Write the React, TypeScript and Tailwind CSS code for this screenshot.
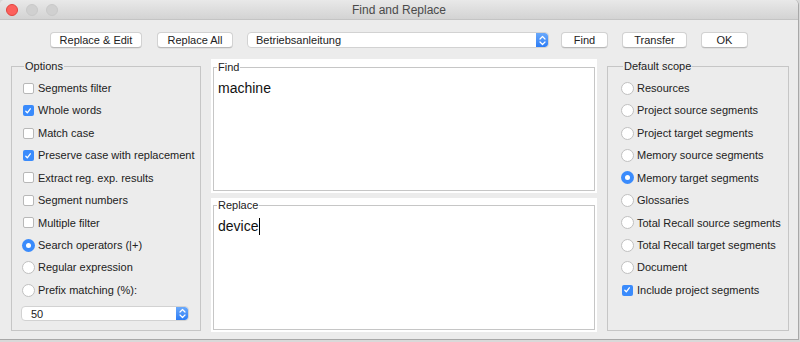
import React from "react";

const font = { fontFamily: '"Liberation Sans", Arial, sans-serif' };

function Stepper() {
  return (
    <span className="flex h-full w-[12px] items-center justify-center rounded-r-[3px] bg-gradient-to-b from-[#6aa9fb] to-[#2b7cf5]">
      <svg width="7" height="11" viewBox="0 0 7 11" fill="none" stroke="white" strokeWidth="1.2" strokeLinecap="round" strokeLinejoin="round">
        <path d="M1 4 L3.5 1.5 L6 4" />
        <path d="M1 7 L3.5 9.5 L6 7" />
      </svg>
    </span>
  );
}

function Btn({ label, w }: { label: string; w: string }) {
  return (
    <div className={`flex h-[16px] items-center justify-center rounded-[4px] border border-[#d2d2d2] border-b-[#b9b9b9] bg-white text-[11px] text-[#222] shadow-[0_0.5px_0.5px_rgba(0,0,0,0.1)] ${w}`}>
      {label}
    </div>
  );
}

function Check({ on }: { on?: boolean }) {
  return on ? (
    <span className="flex h-[11px] w-[11px] items-center justify-center rounded-[2px] bg-[#3a8bfc]">
      <svg width="8" height="8" viewBox="0 0 8 8" fill="none" stroke="white" strokeWidth="1.3" strokeLinecap="round" strokeLinejoin="round">
        <path d="M1.8 4.2 L3.3 5.8 L6.3 1.8" />
      </svg>
    </span>
  ) : (
    <span className="h-[11px] w-[11px] rounded-[2px] border border-[#b8b8b8] bg-white" />
  );
}

function Radio({ on }: { on?: boolean }) {
  return on ? (
    <span className="flex h-[13px] w-[13px] items-center justify-center rounded-full bg-[#3a8bfc]">
      <span className="h-[5px] w-[5px] rounded-full bg-white" />
    </span>
  ) : (
    <span className="h-[13px] w-[13px] rounded-full border border-[#c0c0c0] bg-white" />
  );
}

type Item = { label: string; kind: "c" | "r"; on?: boolean };

function Row({ item }: { item: Item }) {
  return (
    <div className="flex h-[22.45px] items-center whitespace-nowrap">
      <span className="flex w-[14px] shrink-0 justify-center">
        {item.kind === "c" ? <Check on={item.on} /> : <Radio on={item.on} />}
      </span>
      <span className="ml-[3px] shrink-0 text-[11px] text-[#222]">{item.label}</span>
    </div>
  );
}

const options: Item[] = [
  { label: "Segments filter", kind: "c" },
  { label: "Whole words", kind: "c", on: true },
  { label: "Match case", kind: "c" },
  { label: "Preserve case with replacement", kind: "c", on: true },
  { label: "Extract reg. exp. results", kind: "c" },
  { label: "Segment numbers", kind: "c" },
  { label: "Multiple filter", kind: "c" },
  { label: "Search operators (|+)", kind: "r", on: true },
  { label: "Regular expression", kind: "r" },
  { label: "Prefix matching (%):", kind: "r" },
];

const scope: Item[] = [
  { label: "Resources", kind: "r" },
  { label: "Project source segments", kind: "r" },
  { label: "Project target segments", kind: "r" },
  { label: "Memory source segments", kind: "r" },
  { label: "Memory target segments", kind: "r", on: true },
  { label: "Glossaries", kind: "r" },
  { label: "Total Recall source segments", kind: "r" },
  { label: "Total Recall target segments", kind: "r" },
  { label: "Document", kind: "r" },
  { label: "Include project segments", kind: "c", on: true },
];

function TextPanel({ title, text, cursor, h, pt }: { title: string; text: string; cursor?: boolean; h: string; pt: string }) {
  return (
    <div className={`bg-white px-[2px] pb-[2px] ${pt} ${h}`}>
      <fieldset className="h-full min-w-0 border border-[#c6c6c6] px-[4px]">
        <legend className="ml-[-1px] px-[1px] text-[11px] leading-[11px] text-[#222]">{title}</legend>
        <div className="mt-[5px] flex items-center text-[14px] text-[#111]">
          {text}
          {cursor && <span className="ml-[1px] h-[17px] w-[1px] bg-black" />}
        </div>
      </fieldset>
    </div>
  );
}

export default function App() {
  return (
    <div style={font} className="h-[342px] w-[800px] overflow-hidden bg-[#d9d9d9]">
      <div className="flex h-[340px] w-[799px] flex-col overflow-hidden rounded-t-[5px] border-b border-r border-[#a8a8a8] bg-[#ececec]">
        {/* title bar */}
        <div className="relative flex h-[20px] items-center border-b border-[#c4c4c4] bg-gradient-to-b from-[#e9e9e9] to-[#d3d3d3]">
          <div className="flex gap-[8px] pl-[6px]">
            <span className="h-[12px] w-[12px] rounded-full border border-[#e0443e] bg-[#fc605c]" />
            <span className="h-[12px] w-[12px] rounded-full border border-[#c8c8c8] bg-[#d0d0d0]" />
            <span className="h-[12px] w-[12px] rounded-full border border-[#c8c8c8] bg-[#d0d0d0]" />
          </div>
          <span className="absolute inset-x-0 text-center text-[12px] text-[#4a4a4a]">Find and Replace</span>
        </div>

        {/* buttons */}
        <div className="flex items-center pl-[50px] pt-[12px]">
          <Btn label="Replace & Edit" w="w-[92px]" />
          <div className="ml-[15px]"><Btn label="Replace All" w="w-[76px]" /></div>
          <div className="ml-[14px] flex h-[16px] w-[302px] items-center overflow-hidden rounded-[4px] border border-[#d2d2d2] bg-white">
            <span className="flex-1 pl-[8px] text-[11px] text-[#222]">Betriebsanleitung</span>
            <Stepper />
          </div>
          <div className="ml-[12px]"><Btn label="Find" w="w-[47px]" /></div>
          <div className="ml-[14px]"><Btn label="Transfer" w="w-[65px]" /></div>
          <div className="ml-[14px]"><Btn label="OK" w="w-[47px]" /></div>
        </div>

        {/* panels */}
        <div className="mt-[11px] flex">
          <fieldset className="ml-[11px] mt-[1px] h-[271px] w-[190px] min-w-0 shrink-0 border border-[#c6c6c6] pl-[9px] pr-[8px]">
            <legend className="ml-[3px] px-[1px] text-[11px] leading-[13px] text-[#222]">Options</legend>
            <div className="mt-[4px] flex flex-col">
              {options.map((o) => (
                <Row key={o.label} item={o} />
              ))}
            </div>
            <div className="mt-[5px] flex h-[15px] w-[168px] items-center overflow-hidden rounded-[4px] border border-[#d2d2d2] bg-white">
              <span className="flex-1 pl-[9px] text-[11px] text-[#222]">50</span>
              <Stepper />
            </div>
          </fieldset>

          <div className="ml-[10px] flex w-[386px] shrink-0 flex-col gap-[5px]">
            <TextPanel title="Find" text="machine" h="h-[134px]" pt="pt-[3px]" />
            <TextPanel title="Replace" text="device" cursor h="h-[134px]" pt="pt-[2px]" />
          </div>

          <fieldset className="ml-[10px] mt-[1px] h-[271px] w-[182px] min-w-0 shrink-0 border border-[#c6c6c6] pl-[12px]">
            <legend className="ml-[3px] px-[1px] text-[11px] leading-[13px] text-[#222]">Default scope</legend>
            <div className="mt-[4px] flex flex-col">
              {scope.map((o) => (
                <Row key={o.label} item={o} />
              ))}
            </div>
          </fieldset>
        </div>
      </div>
    </div>
  );
}
